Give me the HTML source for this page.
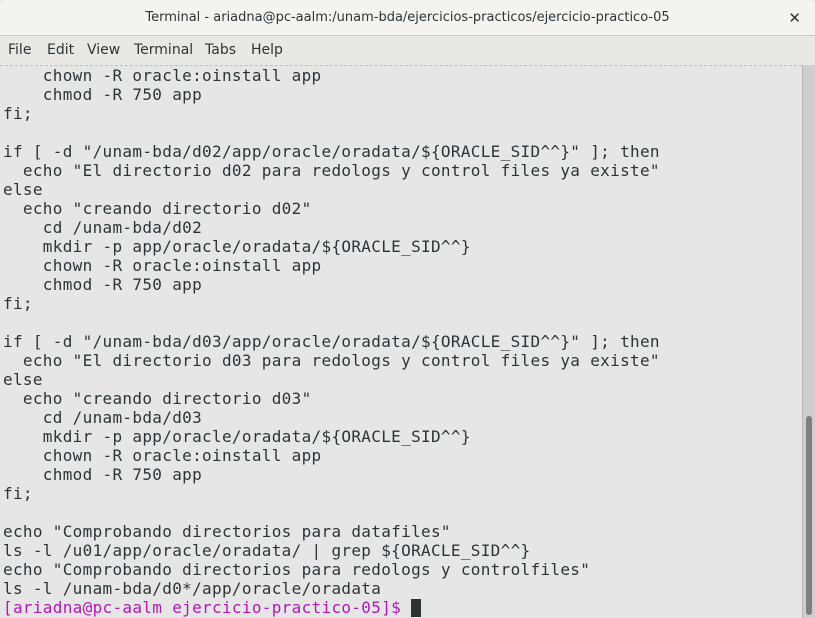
<!DOCTYPE html>
<html><head><meta charset="utf-8"><style>
*{margin:0;padding:0;box-sizing:border-box}
body{width:815px;height:618px;overflow:hidden;background:#e8e8e7;font-family:"DejaVu Sans","Liberation Sans",sans-serif;position:relative}
#title{position:absolute;left:0;top:0;width:815px;height:36px;background:#f3f3f2;border-bottom:1px solid #c8c8c6;border-radius:6px 6px 0 0;text-align:center;line-height:36px;font-size:13px;color:#2e3436;font-weight:500}
#close{position:absolute;right:14px;top:0;font-size:15px;font-weight:bold;color:#2e3436}
#menu{position:absolute;left:0;top:36px;width:815px;height:29px;background:#e8e8e7;font-size:14px;color:#2e3436;line-height:29px}
#menu span{position:absolute}
#dash{position:absolute;left:0;top:65px;width:802px;border-top:1px dashed #bdbdbb}
#term{position:absolute;left:0;top:66px;width:802px;height:552px;background:#e6e6e6}
pre{position:absolute;left:3px;top:66px;font-family:"DejaVu Sans Mono","Liberation Mono",monospace;font-size:16px;line-height:19px;color:#2e3436;letter-spacing:0.32px}
.p{color:#b516b5}
.cur{display:inline-block;width:10px;height:18px;background:#2e3436;vertical-align:-4px}
#sb{position:absolute;left:802px;top:65px;width:13px;height:553px;background:#cecece;border-left:1px solid #b5b5b5}
#thumb{position:absolute;left:806px;top:416px;width:6px;height:199px;background:#7b7f7f;border-radius:3px}
</style></head><body>
<div id="term"></div>
<div id="title">Terminal - ariadna@pc-aalm:/unam-bda/ejercicios-practicos/ejercicio-practico-05<span id="close">✕</span></div>
<div id="menu"><span style="left:8px">File</span><span style="left:47px">Edit</span><span style="left:87px">View</span><span style="left:134px">Terminal</span><span style="left:205px">Tabs</span><span style="left:251px">Help</span></div>
<div id="dash"></div>
<pre>    chown -R oracle:oinstall app
    chmod -R 750 app
fi;

if [ -d "/unam-bda/d02/app/oracle/oradata/${ORACLE_SID^^}" ]; then
  echo "El directorio d02 para redologs y control files ya existe"
else
  echo "creando directorio d02"
    cd /unam-bda/d02
    mkdir -p app/oracle/oradata/${ORACLE_SID^^}
    chown -R oracle:oinstall app
    chmod -R 750 app
fi;

if [ -d "/unam-bda/d03/app/oracle/oradata/${ORACLE_SID^^}" ]; then
  echo "El directorio d03 para redologs y control files ya existe"
else
  echo "creando directorio d03"
    cd /unam-bda/d03
    mkdir -p app/oracle/oradata/${ORACLE_SID^^}
    chown -R oracle:oinstall app
    chmod -R 750 app
fi;

echo "Comprobando directorios para datafiles"
ls -l /u01/app/oracle/oradata/ | grep ${ORACLE_SID^^}
echo "Comprobando directorios para redologs y controlfiles"
ls -l /unam-bda/d0*/app/oracle/oradata
<span class="p">[ariadna@pc-aalm ejercicio-practico-05]$</span> <span class="cur"></span></pre>
<div id="sb"></div><div id="thumb"></div>
</body></html>
